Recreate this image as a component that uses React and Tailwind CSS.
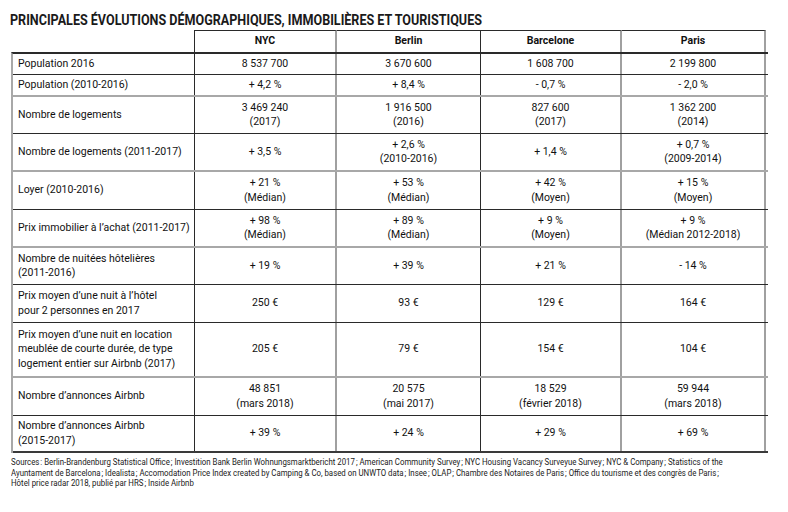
const cols = [
  { w: 'w-[184px]', border: 'border-r border-r-[#2a2a2a]' },
  { w: 'w-[142px]', border: 'border-r-2 border-r-[#a0a0a0]' },
  { w: 'w-[144px]', border: 'border-r border-r-[#2a2a2a]' },
  { w: 'w-[141px]', border: 'border-r-2 border-r-[#a0a0a0]' },
  { w: 'w-[144px]', border: 'border-r-2 border-r-[#a0a0a0]' },
];

const rows = [
  { h: 'h-[21px]', line: 'border-b border-b-[#2a2a2a]', label: ['Population 2016'], v: [['8 537 700'], ['3 670 600'], ['1 608 700'], ['2 199 800']] },
  { h: 'h-[22px]', line: 'border-b-2 border-b-[#a8a8a8]', label: ['Population (2010-2016)'], v: [['+ 4,2 %'], ['+ 8,4 %'], ['- 0,7 %'], ['- 2,0 %']] },
  { h: 'h-[37px]', line: 'border-b border-b-[#2a2a2a]', label: ['Nombre de logements'], v: [['3 469 240', '(2017)'], ['1 916 500', '(2016)'], ['827 600', '(2017)'], ['1 362 200', '(2014)']] },
  { h: 'h-[38px]', line: 'border-b-2 border-b-[#a8a8a8]', label: ['Nombre de logements (2011-2017)'], v: [['+ 3,5 %'], ['+ 2,6 %', '(2010-2016)'], ['+ 1,4 %'], ['+ 0,7 %', '(2009-2014)']] },
  { h: 'h-[38px]', line: 'border-b border-b-[#2a2a2a]', label: ['Loyer (2010-2016)'], v: [['+ 21 %', '(Médian)'], ['+ 53 %', '(Médian)'], ['+ 42 %', '(Moyen)'], ['+ 15 %', '(Moyen)']] },
  { h: 'h-[38px]', line: 'border-b-2 border-b-[#a8a8a8]', label: ['Prix immobilier à l’achat (2011-2017)'], v: [['+ 98 %', '(Médian)'], ['+ 89 %', '(Médian)'], ['+ 9 %', '(Moyen)'], ['+ 9 %', '(Médian 2012-2018)']] },
  { h: 'h-[37px]', line: 'border-b border-b-[#2a2a2a]', label: ['Nombre de nuitées hôtelières', '(2011-2016)'], v: [['+ 19 %'], ['+ 39 %'], ['+ 21 %'], ['- 14 %']] },
  { h: 'h-[38px]', line: 'border-b border-b-[#2a2a2a]', label: ['Prix moyen d’une nuit à l’hôtel', 'pour 2 personnes en 2017'], v: [['250 €'], ['93 €'], ['129 €'], ['164 €']] },
  { h: 'h-[55px]', line: 'border-b-2 border-b-[#a8a8a8]', label: ['Prix moyen d’une nuit en location', 'meublée de courte durée, de type', 'logement entier sur Airbnb (2017)'], v: [['205 €'], ['79 €'], ['154 €'], ['104 €']] },
  { h: 'h-[38px]', line: 'border-b border-b-[#2a2a2a]', label: ['Nombre d’annonces Airbnb'], v: [['48 851', '(mars 2018)'], ['20 575', '(mai 2017)'], ['18 529', '(février 2018)'], ['59 944', '(mars 2018)']] },
  { h: 'h-[37px]', line: 'border-b-2 border-b-[#3a3a3a]', label: ['Nombre d’annonces Airbnb', '(2015-2017)'], v: [['+ 39 %'], ['+ 24 %'], ['+ 29 %'], ['+ 69 %']] },
];

const sources = [
  'Sources\u202f: Berlin-Brandenburg Statistical Office\u202f; Investition Bank Berlin Wohnungsmarktbericht 2017\u202f; American Community Survey\u202f; NYC Housing Vacancy Surveyue Survey\u202f; NYC & Company\u202f; Statistics of the',
  'Ayuntament de Barcelona\u202f; Idealista\u202f; Accomodation Price Index created by Camping & Co, based on UNWTO data\u202f; Insee\u202f; OLAP\u202f; Chambre des Notaires de Paris\u202f; Office du tourisme et des congrès de Paris\u202f;',
  'Hôtel price radar 2018, publié par HRS\u202f; Inside Airbnb',
];

function Lines({ lines }) {
  return lines.map((t, i) => (
    <span key={i} className="block whitespace-nowrap">
      {t}
    </span>
  ));
}

export default function App() {
  return (
    <div className="h-[512px] w-[788px] overflow-hidden bg-white font-['Roboto',sans-serif] text-[#111]">
      <div className="pl-[10px] pt-[12px] text-[14px] font-bold leading-[16px] text-[#1a1a1a]">
        <span className="inline-block origin-left scale-x-[0.897] whitespace-nowrap">
          PRINCIPALES ÉVOLUTIONS DÉMOGRAPHIQUES, IMMOBILIÈRES ET TOURISTIQUES
        </span>
      </div>

      <div className="ml-[11px] mt-[2px] w-[757px] text-[10.5px] leading-[14.5px]">
        {/* header */}
        <div className="flex h-[22px]">
          <div className="w-[184px] border-r border-r-[#2a2a2a]" />
          {['NYC', 'Berlin', 'Barcelone', 'Paris'].map((c, i) => (
            <div
              key={c}
              className={`${cols[i + 1].w} ${cols[i + 1].border} flex items-center justify-center border-t border-t-[#2a2a2a] font-bold`}
            >
              {c}
            </div>
          ))}
        </div>

        <div className="border-l-2 border-t-2 border-l-[#a8a8a8] border-t-[#2a2a2a]">
          {rows.map((r, ri) => (
            <div key={ri} className={`flex ${r.h} ${r.line}`}>
              <div className="flex w-[182px] items-center border-r border-r-[#2a2a2a] pl-[5px]">
                <div>
                  <Lines lines={r.label} />
                </div>
              </div>
              {r.v.map((v, ci) => (
                <div
                  key={ci}
                  className={`${cols[ci + 1].w} ${cols[ci + 1].border} flex items-center justify-center text-center`}
                >
                  <div>
                    <Lines lines={v} />
                  </div>
                </div>
              ))}
            </div>
          ))}
        </div>
      </div>

      <div className="ml-[11px] mt-[4px] text-[8.5px] leading-[10.5px] text-[#1a1a1a]">
        {sources.map((s, i) => (
          <div key={i} className="origin-left scale-x-[0.923] whitespace-nowrap">
            {s}
          </div>
        ))}
      </div>
    </div>
  );
}
